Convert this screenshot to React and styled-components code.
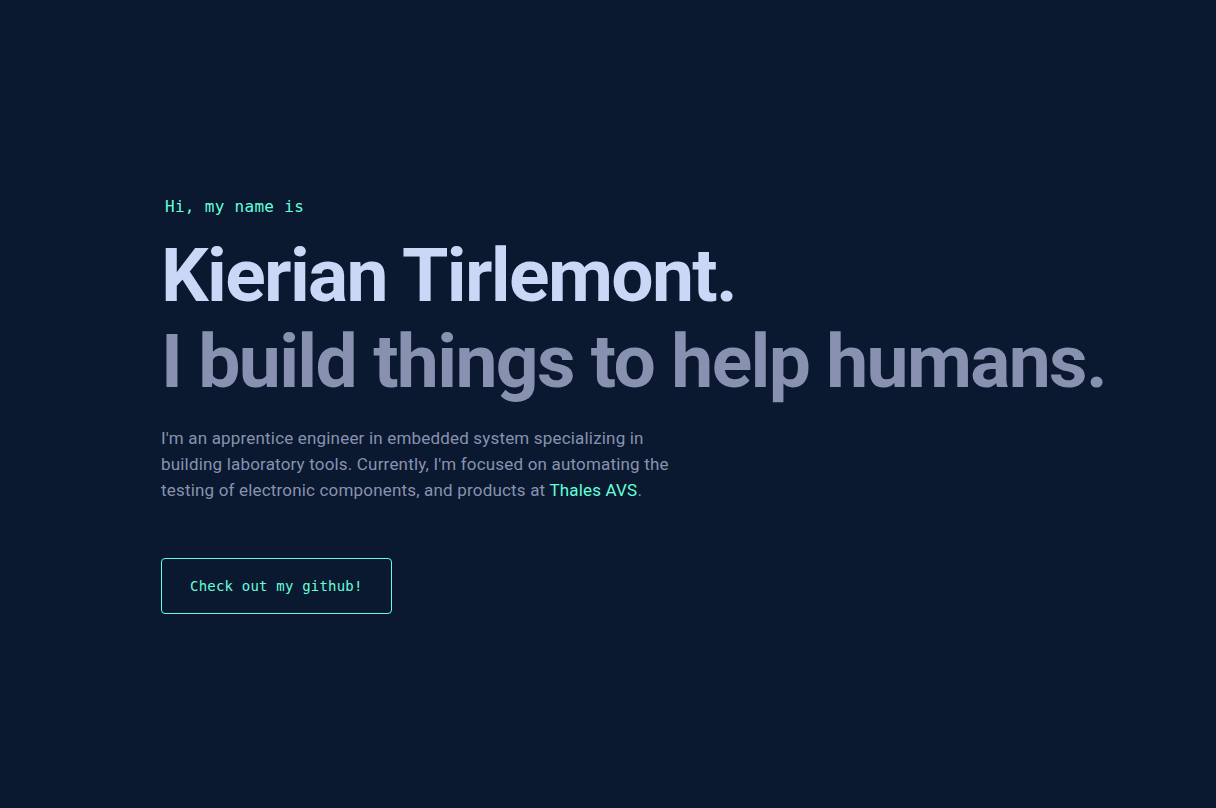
import styled, { createGlobalStyle } from 'styled-components';

const GlobalStyle = createGlobalStyle`
  * { box-sizing: border-box; }
  html, body {
    margin: 0;
    background: #0a192f;
  }
  body {
    font-family: Roboto, "Liberation Sans", sans-serif;
    color: #8892b0;
  }
`;

const Hero = styled.section`
  min-height: 100vh;
  display: flex;
  flex-direction: column;
  justify-content: center;
  align-items: flex-start;
  padding: 4px 0 0 161px;
`;

const Intro = styled.h1`
  margin: 0 0 16px 4px;
  font-family: "DejaVu Sans Mono", "Liberation Mono", monospace;
  font-size: 16px;
  font-weight: 400;
  letter-spacing: 0.3px;
  color: #64ffda;
  line-height: 1.1;
`;

const BigHeading = styled.h2`
  margin: 0;
  font-family: Roboto, "Liberation Sans", sans-serif;
  font-weight: 700;
  font-size: 75px;
  line-height: ${({ $sub }) => ($sub ? '85px' : '88px')};
  color: ${({ $sub }) => ($sub ? '#8892b0' : '#ccd6f6')};
  letter-spacing: -1.65px;
`;

const Blurb = styled.p`
  margin: 21px 0 0;
  max-width: 540px;
  font-size: 17px;
  letter-spacing: 0.18px;
  line-height: 26px;
  color: #8892b0;
`;

const Link = styled.a`
  color: #64ffda;
  text-decoration: none;
`;

const OutlineButton = styled.a`
  margin-top: 55px;
  display: inline-block;
  padding: 20px 28px;
  border: 1px solid #64ffda;
  border-radius: 4px;
  font-family: "DejaVu Sans Mono", "Liberation Mono", monospace;
  font-size: 14px;
  letter-spacing: 0.2px;
  line-height: 14px;
  color: #64ffda;
  text-decoration: none;
`;

export default function App() {
  return (
    <>
      <GlobalStyle />
      <Hero>
        <Intro>Hi, my name is</Intro>
        <BigHeading>Kierian Tirlemont.</BigHeading>
        <BigHeading as="h3" $sub>I build things to help humans.</BigHeading>
        <Blurb>
          I'm an apprentice engineer in embedded system specializing in building laboratory tools.
          Currently, I'm focused on automating the testing of electronic components, and products at{' '}
          <Link href="#">Thales AVS</Link>.
        </Blurb>
        <OutlineButton href="#">Check out my github!</OutlineButton>
      </Hero>
    </>
  );
}
